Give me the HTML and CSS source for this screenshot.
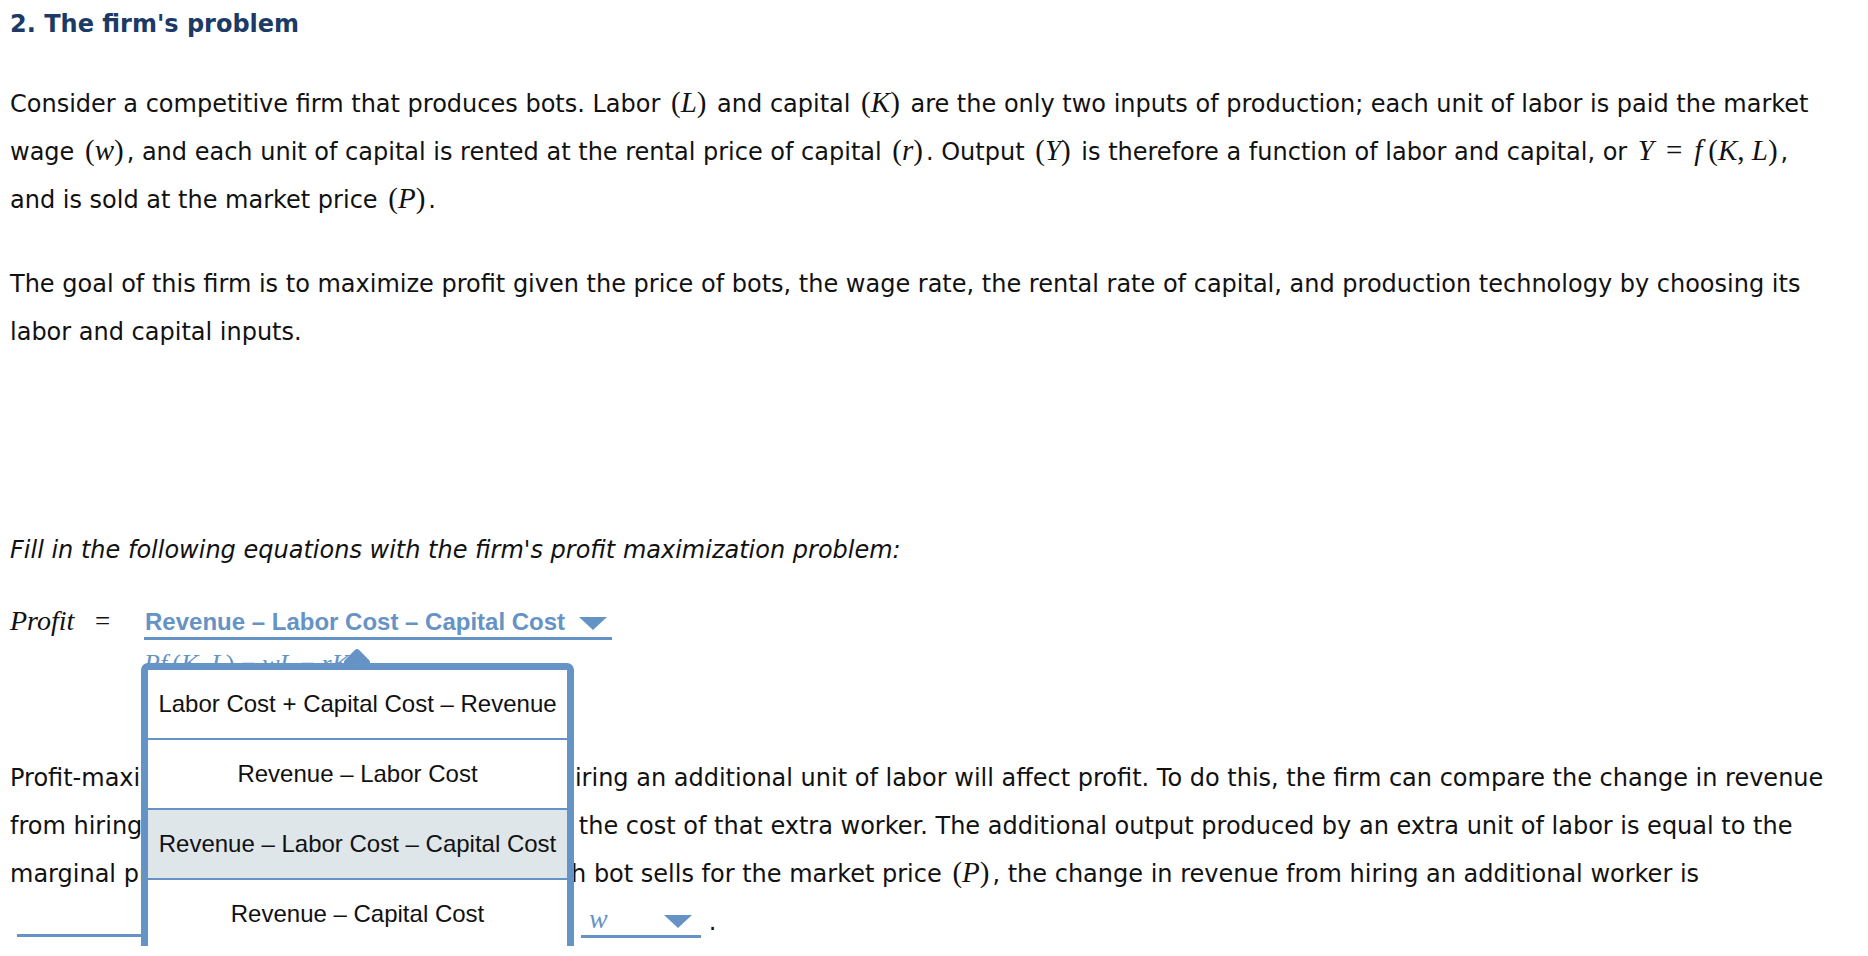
FILE: index.html
```html
<!DOCTYPE html>
<html lang="en">
  <head>
    <meta charset="UTF-8" />
    <meta name="viewport" content="width=device-width, initial-scale=1.0" />
    <link rel="stylesheet" href="styles.css">
    <title>The firm's problem</title>
  </head>
  <body>
    <div class="page">
      <h2 class="title">2. The firm's problem</h2>

      <p class="para">
        Consider a competitive firm that produces bots. Labor <span class="mj">(<i>L</i>)</span> and capital <span class="mj">(<i>K</i>)</span> are the only two inputs of production; each unit of labor is paid the market<br>
        wage <span class="mj">(<i>w</i>)</span>, and each unit of capital is rented at the rental price of capital <span class="mj">(<i>r</i>)</span>. Output <span class="mj">(<i>Y</i>)</span> is therefore a function of labor and capital, or <span class="mj"><i>Y</i><span class="op">=</span><i>f</i>&thinsp;(<i>K</i>, <i>L</i>)</span>,<br>
        and is sold at the market price <span class="mj">(<i>P</i>)</span>.
      </p>

      <p class="para">
        The goal of this firm is to maximize profit given the price of bots, the wage rate, the rental rate of capital, and production technology by choosing its<br>
        labor and capital inputs.
      </p>

      <div class="gap"></div>

      <p class="para prompt"><em>Fill in the following equations with the firm's profit maximization problem:</em></p>

      <div class="eq-row">
        <span class="eq-lhs">Profit</span><span class="eq-sign">=</span><span class="select sel-profit"><span class="sel-value">Revenue – Labor Cost – Capital Cost</span><span class="caret"></span></span>
      </div>
      <div class="eq-next">
        <span class="eq-math"><i>Pf</i>&thinsp;(<i>K</i>, <i>L</i>) − <i>wL</i> − <i>rK</i></span>
      </div>

      <p class="para after-eq">
        Profit-maximizing firms do want to know how hiring an additional unit of labor will affect profit. To do this, the firm can compare the change in revenue<br>
        from hiring one additional unit of labor against the cost of that extra worker. The additional output produced by an extra unit of labor is equal to the<br>
        marginal product of labor or MPL. Because each bot sells for the market price <span class="mj">(<i>P</i>)</span>, the change in revenue from hiring an additional worker is<br>
        <span class="select sel-blank"><span class="sel-value">&nbsp;</span><span class="caret"></span></span><span class="select sel-w"><span class="sel-value"><i>w</i></span><span class="caret"></span></span> .
      </p>

      <div class="menu">
        <div class="menu-item">Labor Cost + Capital Cost – Revenue</div>
        <div class="menu-item">Revenue – Labor Cost</div>
        <div class="menu-item active">Revenue – Labor Cost – Capital Cost</div>
        <div class="menu-item">Revenue – Capital Cost</div>
      </div>
    </div>
  </body>
</html>
```

FILE: styles.css
```css
body {
  margin: 0;
  background-color: #fff;
  color: #111;
  font-family: "DejaVu Sans", Verdana, sans-serif;
  font-size: 24px;
}

.page {
  position: relative;
  padding: 0 10px;
}

.title {
  margin: 0;
  font-size: 24px;
  line-height: 48px;
  color: #1b3a66;
}

.para {
  margin: 32px 0 0 0;
  line-height: 48px;
  white-space: nowrap;
}
.para + .para {
  margin-top: 36px;
}

/* math bits, typeset like MathJax */
.mj {
  margin: 0 3px;
  font-family: "Liberation Serif", "Times New Roman", serif;
  font-size: 29px;
  line-height: 1;
}
.op {
  margin: 0 12px;
}

.gap {
  height: 134px;
}

.prompt {
  margin-top: 36px;
}

/* equation row */
.eq-row {
  margin-top: 24px;
  line-height: 48px;
  height: 48px;
}

.eq-lhs {
  display: inline-block;
  width: 85px;
  font-family: "Liberation Serif", "Times New Roman", serif;
  font-style: italic;
  font-size: 28px;
  line-height: 1;
}

.eq-sign {
  display: inline-block;
  width: 49px;
  font-family: "Liberation Serif", "Times New Roman", serif;
  font-size: 27px;
  line-height: 1;
}

.eq-next {
  height: 32px;
  line-height: 32px;
  padding-left: 134px;
  padding-top: 2px;
}

.eq-math {
  font-family: "Liberation Serif", "Times New Roman", serif;
  font-size: 26px;
  color: #6593c5;
}

.after-eq {
  margin-top: 74px;
}

/* dropdowns */
.select {
  display: inline-flex;
  align-items: baseline;
  justify-content: space-between;
  border-bottom: 3px solid #6593c5;
  color: #6593c5;
  line-height: 1.3;
}

.sel-profit {
  width: 468px;
  padding: 0 5px 0 1px;
  box-sizing: border-box;
  font-family: "Liberation Sans", Arial, sans-serif;
  font-weight: bold;
  font-size: 24px;
}

.sel-blank {
  width: 540px;
  margin-left: 7px;
  font-size: 20px;
  vertical-align: 2px;
}

.sel-w {
  width: 120px;
  margin-left: 24px;
  padding: 0 9px 0 8px;
  box-sizing: border-box;
  font-family: "Liberation Serif", "Times New Roman", serif;
  font-size: 28px;
  line-height: 32px;
  vertical-align: 2px;
}

.caret {
  display: inline-block;
  width: 0;
  height: 0;
  border-left: 14px solid transparent;
  border-right: 14px solid transparent;
  border-top: 13px solid #6593c5;
}

/* open option list */
.menu {
  position: absolute;
  top: 663px;
  left: 141px;
  width: 433px;
  box-sizing: border-box;
  border: 7px solid #6593c5;
  border-radius: 7px;
  background-color: #fff;
  z-index: 10;
}
.menu::before {
  content: "";
  position: absolute;
  top: -18px;
  left: 199px;
  width: 20px;
  height: 20px;
  background-color: #6593c5;
  border-radius: 3px;
  transform: rotate(45deg);
  z-index: -1;
}

.menu-item {
  height: 68px;
  display: flex;
  align-items: center;
  justify-content: center;
  background-color: #fff;
  font-family: "Liberation Sans", Arial, sans-serif;
  font-size: 24px;
  color: #111;
  white-space: nowrap;
}
.menu-item + .menu-item {
  border-top: 2px solid #6593c5;
}
.menu-item.active {
  background-color: #dfe6e9;
}
```
